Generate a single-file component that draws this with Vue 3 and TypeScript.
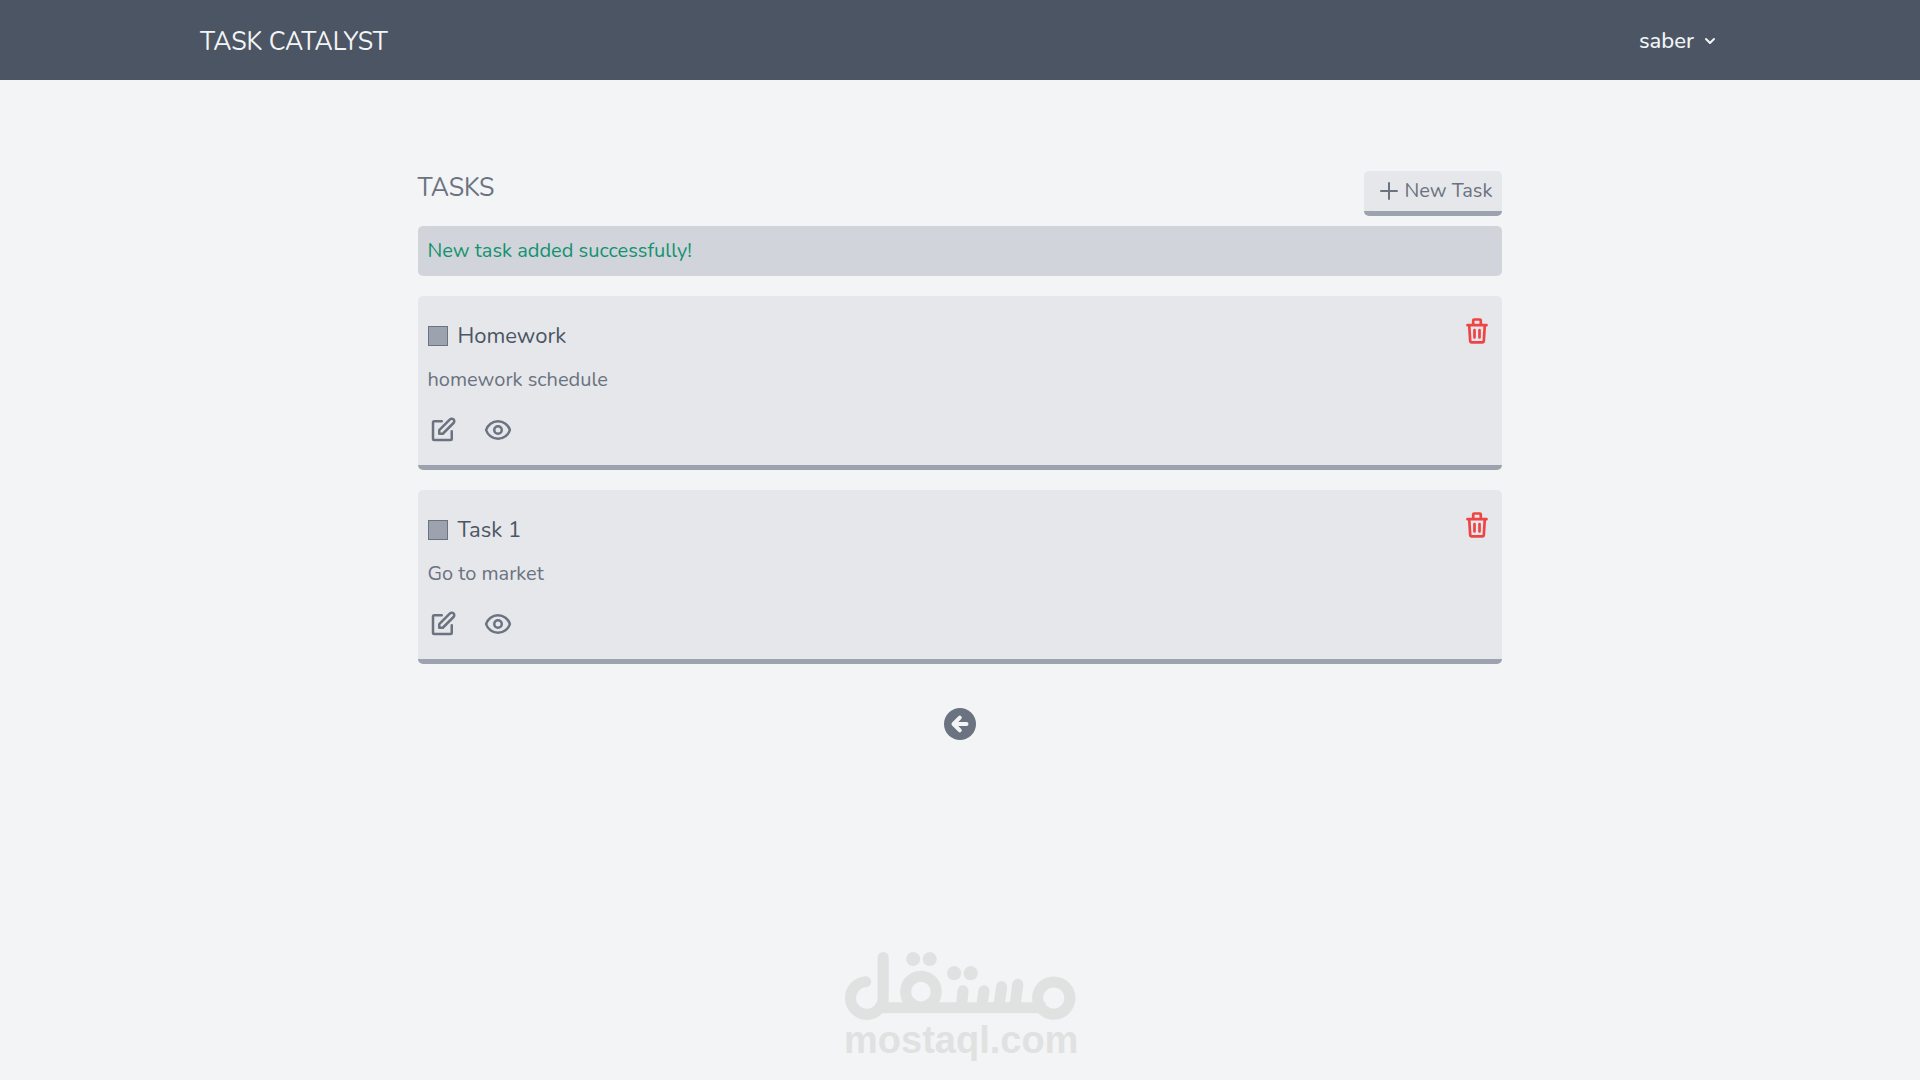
<script setup lang="ts">
import { ref } from 'vue'

interface Task {
  id: number
  title: string
  description: string
  done: boolean
}

const user = 'saber'
const message = 'New task added successfully!'
const tasks = ref<Task[]>([
  { id: 2, title: 'Homework', description: 'homework schedule', done: false },
  { id: 1, title: 'Task 1', description: 'Go to market', done: false },
])

function removeTask(id: number) {
  tasks.value = tasks.value.filter((task) => task.id !== id)
}
</script>

<template>
  <div class="page">
    <header class="navbar">
      <div class="navbar-inner">
        <a href="#" class="brand">TASK CATALYST</a>
        <button type="button" class="user-menu">
          {{ user }}
          <svg class="chevron" viewBox="0 0 20 20" fill="currentColor" aria-hidden="true">
            <path d="M5.293 7.293a1 1 0 011.414 0L10 10.586l3.293-3.293a1 1 0 111.414 1.414l-4 4a1 1 0 01-1.414 0l-4-4a1 1 0 010-1.414z" />
          </svg>
        </button>
      </div>
    </header>

    <main class="content">
      <div class="toolbar">
        <h1 class="heading">TASKS</h1>
        <a href="#" class="new-task">
          <svg class="plus" viewBox="0 0 24 24" aria-hidden="true">
            <path d="M12 4v16M4 12h16" />
          </svg>
          New Task
        </a>
      </div>

      <p class="alert" role="status">{{ message }}</p>

      <ul class="tasks">
        <li v-for="task in tasks" :key="task.id" class="card">
          <div class="body">
            <div class="title-row">
              <input :id="`task-${task.id}`" v-model="task.done" type="checkbox" class="check" />
              <label :for="`task-${task.id}`" class="title">{{ task.title }}</label>
            </div>
            <p class="description">{{ task.description }}</p>
            <div class="actions">
              <a href="#" class="icon-link" aria-label="Edit task">
                <svg class="icon" viewBox="0 0 24 24" stroke-width="2" aria-hidden="true">
                  <path d="M11 5H5a1 1 0 00-1 1v13a1 1 0 001 1h13a1 1 0 001-1v-6" />
                  <path d="M17.586 3.586a2 2 0 112.828 2.828L11.828 15H9v-2.828z" />
                </svg>
              </a>
              <a href="#" class="icon-link" aria-label="View task">
                <svg class="icon" viewBox="0 0 24 24" stroke-width="2" aria-hidden="true">
                  <circle cx="12" cy="12" r="3" />
                  <path d="M2.458 12C3.732 7.943 7.523 5 12 5c4.478 0 8.268 2.943 9.542 7-1.274 4.057-5.064 7-9.542 7-4.477 0-8.268-2.943-9.542-7z" />
                </svg>
              </a>
            </div>
          </div>
          <button type="button" class="delete" aria-label="Delete task" @click="removeTask(task.id)">
            <svg class="icon" viewBox="0 0 30 30" stroke-width="2.7" aria-hidden="true">
              <path d="M5.500 9.200h19M11.200 9V4.500a1 1 0 011-1h5.600a1 1 0 011 1V9M7.200 9.500l1 15.500a1.500 1.500 0 001.500 1.400h10.600a1.500 1.500 0 001.500-1.400l1-15.500M12.500 14v7.500M17.500 14v7.500" />
            </svg>
          </button>
        </li>
      </ul>

      <a href="#" class="back" aria-label="Back">
        <svg viewBox="0 0 32 32" aria-hidden="true">
          <circle cx="16" cy="16" r="16" />
          <path d="M22.500 16H10M15.800 9.700L9.500 16l6.300 6.300" />
        </svg>
      </a>
    </main>

    <div class="watermark">
      <svg viewBox="0 0 230 68" aria-hidden="true">
        <g class="strokes">
          <path d="M21.500 29.500A16.200 16.200 0 1 0 38.800 45V5.500" />
          <path class="bar" d="M33 55.300H200" />
          <circle cx="76.300" cy="39.300" r="15.200" />
          <path d="M118 38.500L116.500 54M138.800 38.500L136.500 54M156.300 34.500L153.500 54M172.300 32L169.500 54" />
          <circle class="ring" cx="208" cy="45.700" r="16" />
        </g>
        <g class="dots">
          <circle cx="68.600" cy="7" r="7" />
          <circle cx="85" cy="7" r="7" />
          <circle cx="109.200" cy="21" r="7" />
          <circle cx="125.600" cy="21" r="7" />
        </g>
      </svg>
      <span class="domain">mostaql.com</span>
    </div>
  </div>
</template>

<style>
body {
  background: #f3f4f6;
}
</style>

<style scoped>
.page {
  position: relative;
  min-height: 100vh;
  background: #f3f4f6;
  font-family: Nunito, Lato, sans-serif;
  font-size: 20px;
  line-height: 30px;
  color: #6b7280;
}

a {
  color: inherit;
  text-decoration: none;
}

button {
  padding: 0;
  border: 0;
  background: none;
  font: inherit;
  color: inherit;
  cursor: pointer;
}

svg {
  display: block;
}

.navbar {
  background: #4b5563;
  color: #f3f4f6;
}

.navbar-inner {
  display: flex;
  align-items: center;
  justify-content: space-between;
  box-sizing: border-box;
  max-width: 1520px;
  height: 80px;
  margin: 0 auto;
  padding-top: 2px;
}

.brand {
  padding-top: 2px;
  font-size: 25px;
}

.user-menu {
  display: flex;
  align-items: center;
  gap: 6px;
  font-size: 22px;
  font-weight: 500;
}

.chevron {
  width: 20px;
  height: 20px;
}

.content {
  width: 56.51%;
  margin: 0 auto;
  padding-top: 91px;
}

.toolbar {
  display: flex;
  align-items: flex-start;
  justify-content: space-between;
  margin-bottom: 10px;
}

.heading {
  margin: 0;
  font-size: 25px;
  font-weight: 400;
  line-height: 35px;
}

.new-task {
  display: flex;
  align-items: center;
  gap: 3px;
  padding: 5px 10px 5px 13px;
  border-bottom: 5px solid #9ca3af;
  border-radius: 5px;
  background: #e5e7eb;
}

.plus {
  width: 24px;
  height: 24px;
  fill: none;
  stroke: currentColor;
  stroke-width: 2;
  stroke-linecap: round;
}

.alert {
  margin: 0 0 20px;
  padding: 10px;
  border-radius: 5px;
  background: #d1d5db;
  color: #149270;
}

.tasks {
  display: flex;
  flex-direction: column;
  gap: 20px;
  margin: 0;
  padding: 0;
  list-style: none;
}

.card {
  display: flex;
  align-items: flex-start;
  justify-content: space-between;
  padding: 20px 10px;
  border-bottom: 5px solid #9ca3af;
  border-radius: 5px;
  background: #e5e7eb;
}

.title-row {
  display: flex;
  align-items: center;
  gap: 10px;
  padding-top: 5px;
}

.check {
  appearance: none;
  width: 20px;
  height: 20px;
  margin: 0;
  border: 1px solid #6b7280;
  background: #9ca3af;
}

.check:checked {
  background: #4b5563;
}

.title {
  font-size: 22px;
  color: #4b5563;
}

.description {
  margin: 14px 0 20px;
}

.actions {
  display: flex;
  gap: 25px;
}

.icon {
  width: 30px;
  height: 30px;
  fill: none;
  stroke: currentColor;
  stroke-linecap: round;
  stroke-linejoin: round;
}

.delete {
  color: #ef4444;
}

.back {
  display: block;
  width: 32px;
  margin: 44px auto 0;
}

.back circle {
  fill: #6b7280;
}

.back path {
  fill: none;
  stroke: #f3f4f6;
  stroke-width: 4;
  stroke-linecap: round;
  stroke-linejoin: round;
}

.watermark {
  position: absolute;
  bottom: 21px;
  left: 50%;
  width: 232px;
  margin-left: -116px;
  color: #e0e2e1;
  pointer-events: none;
}

.strokes {
  fill: none;
  stroke: currentColor;
  stroke-width: 11;
  stroke-linecap: round;
}

.strokes .bar {
  stroke-linecap: butt;
}

.dots {
  fill: currentColor;
}

.domain {
  display: block;
  font-family: "Liberation Sans", sans-serif;
  font-size: 38px;
  font-weight: 700;
  line-height: 38px;
  text-align: center;
}
</style>
